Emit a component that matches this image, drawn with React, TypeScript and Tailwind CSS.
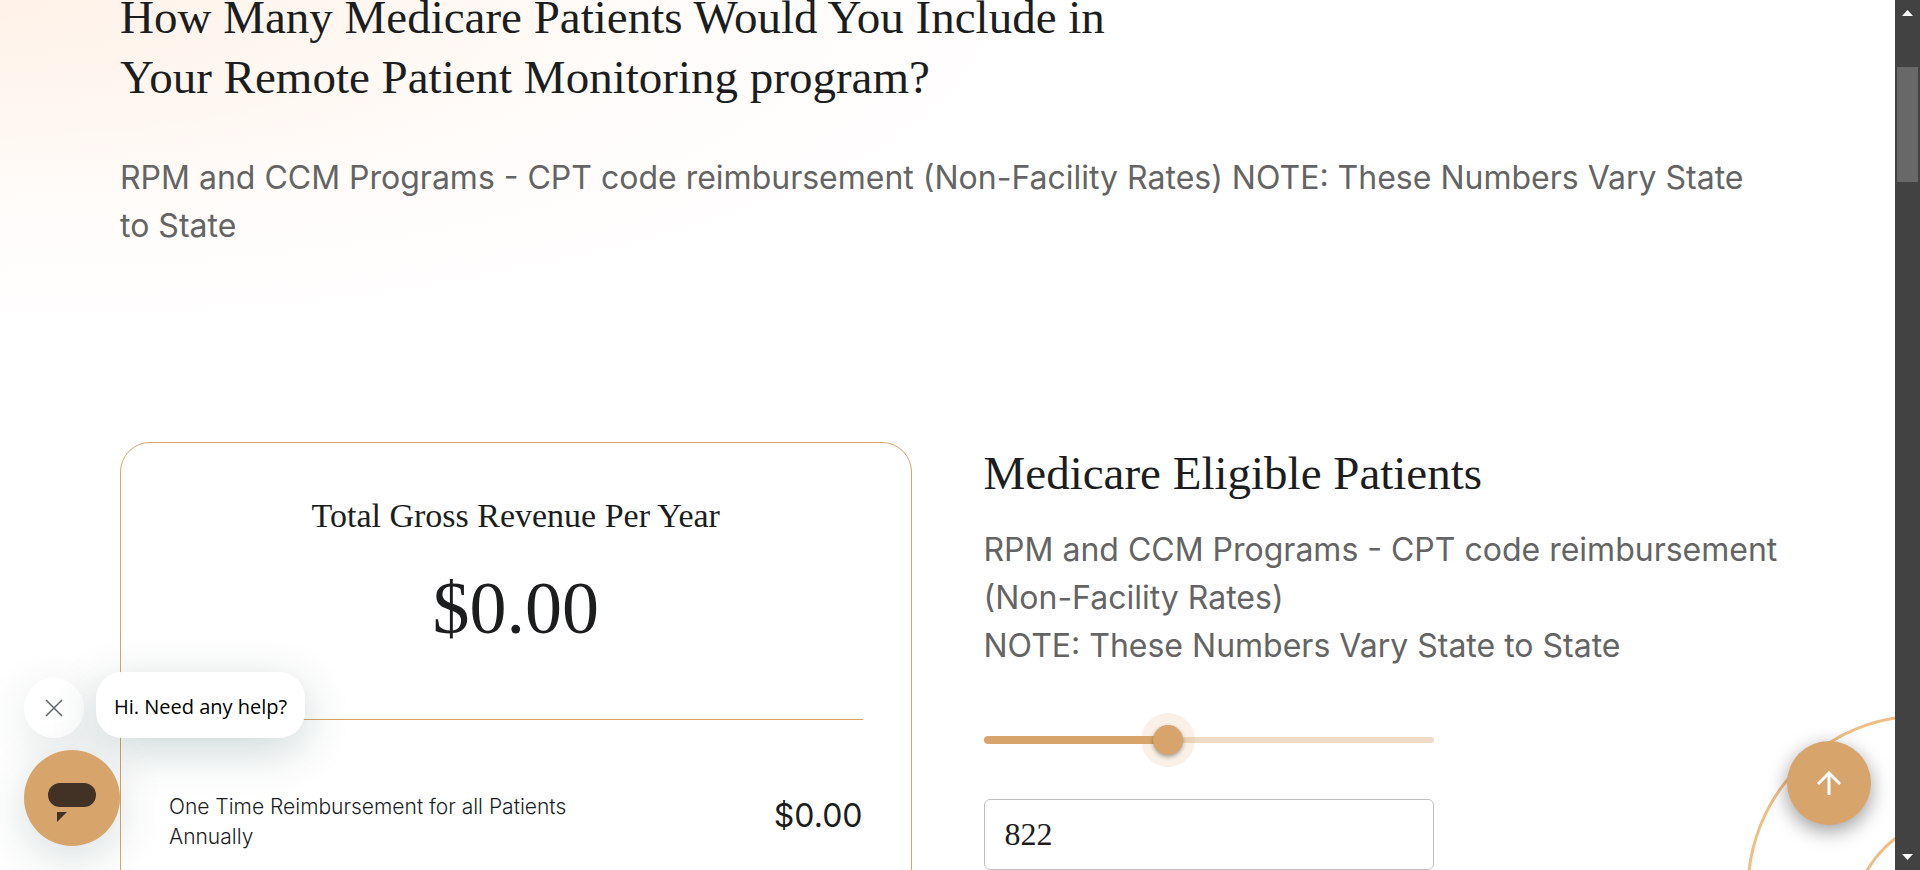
import { useState } from "react";

const SERIF = "font-['Liberation_Serif',serif]";
const MAX_PATIENTS = 2000;

function Scrollbar() {
  return (
    <div aria-hidden="true" className="flex w-[25px] shrink-0 flex-col items-center justify-between bg-[#424242] py-[10px]">
      <div className="flex flex-col items-center gap-[51px]">
        <svg width="11" height="6" viewBox="0 0 11 6" fill="#fff">
          <path d="M0 6 5.5 0 11 6z" />
        </svg>
        <div className="h-[115px] w-[21px] bg-[#686868]" />
      </div>
      <svg width="11" height="6" viewBox="0 0 11 6" fill="#fff">
        <path d="M0 0h11L5.500 6z" />
      </svg>
    </div>
  );
}

function RevenueCard() {
  return (
    <section className="h-[700px] rounded-[30px] border border-[#d7a56c] px-12 pt-[53px] text-center text-[#1b1d1e]">
      <h3 className={`${SERIF} text-[34px] leading-10 font-normal`}>Total Gross Revenue Per Year</h3>
      <p className={`${SERIF} mt-[27px] text-[74px] leading-[90px]`}>$0.00</p>
      <hr className="mt-[66px] border-[#d7a56c]" />
      <div className="mt-[72px] flex items-start justify-between text-left">
        <p className="w-[440px] text-[21px] leading-[30px] font-light">One Time Reimbursement for all Patients Annually</p>
        <p className="text-[32px] leading-12">$0.00</p>
      </div>
    </section>
  );
}

function PatientsForm() {
  const [patients, setPatients] = useState(822);
  const percent = `${Math.min(100, (patients / MAX_PATIENTS) * 100)}%`;
  return (
    <section className="-mr-6 pt-px">
      <h2 className={`${SERIF} text-[47px] leading-[60px] font-normal text-[#1b1d1e]`}>Medicare Eligible Patients</h2>
      <p className="mt-[23px] text-[32px] leading-12 text-[#646464]">
        RPM and CCM Programs - CPT code reimbursement (Non-Facility Rates)
        <br />
        NOTE: These Numbers Vary State to State
      </p>
      <div className="mt-[43px] w-[450px] max-w-full">
        <div className="relative flex h-[54px] items-center">
          <div className="h-[6px] w-full rounded-full bg-[#efdbc5]" />
          <div className="absolute left-0 h-2 rounded-full bg-[#d7a56c]" style={{ width: percent }} />
          <div
            className="absolute flex size-[54px] -translate-x-1/2 items-center justify-center rounded-full bg-[#d7a56c]/16"
            style={{ left: percent }}
          >
            <div className="size-[30px] rounded-full bg-[#d7a56c] shadow-[0_2px_4px_rgba(0,0,0,0.35)]" />
          </div>
          <input
            type="range"
            aria-label="Medicare eligible patients"
            min={0}
            max={MAX_PATIENTS}
            value={patients}
            onChange={(e) => setPatients(Number(e.target.value))}
            className="absolute inset-0 w-full cursor-pointer opacity-0"
          />
        </div>
        <input
          type="text"
          inputMode="numeric"
          aria-label="Number of patients"
          value={patients}
          onChange={(e) => setPatients(Number(e.target.value) || 0)}
          className={`${SERIF} mt-8 h-[71px] w-full rounded-md border border-[#c0c0c0] bg-white px-5 text-[32px] text-[#1b1d1e]`}
        />
      </div>
    </section>
  );
}

function ChatWidget() {
  return (
    <div className="absolute bottom-6 left-6 flex flex-col gap-3">
      <div className="flex items-end gap-3">
        <button
          aria-label="Close message"
          className="flex size-[60px] items-center justify-center rounded-full bg-white shadow-[0_12px_48px_rgba(0,50,50,0.12)]"
        >
          <svg width="18" height="18" viewBox="0 0 18 18" stroke="#5f666b" strokeWidth="1.500" fill="none">
            <path d="M1 1 17 17M17 1 1 17" />
          </svg>
        </button>
        <button className="h-[66px] rounded-[26px] bg-white px-[18px] pt-[3px] font-['Open_Sans',sans-serif] text-xl whitespace-nowrap text-black shadow-[0_12px_48px_rgba(0,50,50,0.2)]">
          Hi. Need any help?
        </button>
      </div>
      <button
        aria-label="Open chat"
        className="flex size-24 items-center justify-center rounded-full bg-[#d7a56c] shadow-[0_12px_48px_rgba(0,50,50,0.16)]"
      >
        <svg width="48" height="48" viewBox="0 0 48 48" fill="#423225">
          <rect y="9" width="48" height="24" rx="12" />
          <path d="M9 38h10L9 48z" />
        </svg>
      </button>
    </div>
  );
}

export default function App() {
  return (
    <div className="flex h-screen overflow-hidden bg-white font-['Inter',sans-serif]">
      <div className="relative min-w-0 flex-1 overflow-hidden bg-[radial-gradient(ellipse_1100px_350px_at_0_0,#fff2e8_0%,#fff7f1_35%,#fffcfa_60%,#ffffff_100%)]">
        <svg aria-hidden="true" className="absolute right-0 bottom-0" width="150" height="156" viewBox="1745 714 150 156" fill="none" stroke="#eebf85" strokeWidth="3">
          <circle cx="1922" cy="890" r="174" />
          <circle cx="1962" cy="926" r="110" />
        </svg>
        <main className="relative px-[120px]">
          <div className="-mt-[13px]">
            <h1 className={`${SERIF} max-w-[1100px] text-[47px] leading-[60px] font-normal text-[#1b1d1e]`}>
              How Many Medicare Patients Would You Include in
              <br />
              Your Remote Patient Monitoring program?
            </h1>
            <p className="mt-[47px] text-[32px] leading-12 text-[#646464]">
              RPM and CCM Programs - CPT code reimbursement (Non-Facility Rates) NOTE: These Numbers Vary State to State
            </p>
          </div>
          <div className="mt-48 grid grid-cols-2 items-start gap-[72px]">
            <RevenueCard />
            <PatientsForm />
          </div>
        </main>
        <ChatWidget />
        <button
          aria-label="Back to top"
          className="absolute right-6 bottom-[45px] flex size-[84px] items-center justify-center rounded-full bg-[#d7a56c] shadow-[0_6px_20px_rgba(0,0,0,0.4)]"
        >
          <svg width="24" height="24" viewBox="0 0 24 24" fill="none" stroke="#fff" strokeWidth="3">
            <path d="M12 24V2M1 13 12 2 23 13" />
          </svg>
        </button>
      </div>
      <Scrollbar />
    </div>
  );
}
